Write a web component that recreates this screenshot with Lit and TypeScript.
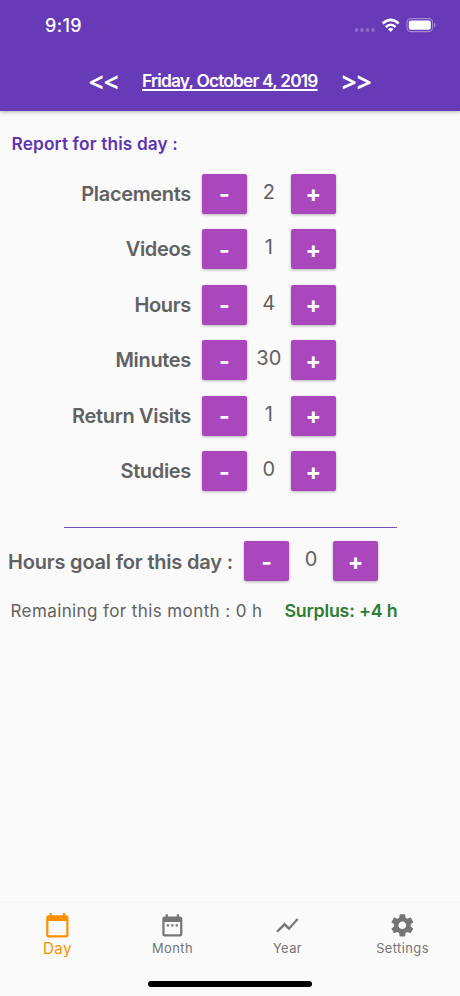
import { LitElement, html, svg, css } from "lit";
import { customElement, property, state } from "lit/decorators.js";
import { classMap } from "lit/directives/class-map.js";

const ICONS: Record<string, string> = {
  Day: "M20 3h-1V1h-2v2H7V1H5v2H4c-1.1 0-2 .9-2 2v16c0 1.1.9 2 2 2h16c1.1 0 2-.9 2-2V5c0-1.1-.9-2-2-2zm0 18H4V8h16v13z",
  Month:
    "M9 11H7v2h2v-2zm4 0h-2v2h2v-2zm4 0h-2v2h2v-2zm2-7h-1V2h-2v2H8V2H6v2H5c-1.11 0-1.99.9-1.99 2L3 20c0 1.1.89 2 2 2h14c1.1 0 2-.9 2-2V6c0-1.1-.9-2-2-2zm0 16H5V9h14v11z",
  Year: "M3.5 18.49l6-6.01 4 4L22 6.92l-1.41-1.41-7.09 7.97-4-4L2 16.99z",
  Settings:
    "M19.43 12.98c.04-.32.07-.64.07-.98s-.03-.66-.07-.98l2.11-1.65c.19-.15.24-.42.12-.64l-2-3.46c-.12-.22-.39-.3-.61-.22l-2.49 1c-.52-.4-1.08-.73-1.69-.98l-.38-2.65C14.46 2.18 14.25 2 14 2h-4c-.25 0-.46.18-.49.42l-.38 2.65c-.61.25-1.17.59-1.69.98l-2.49-1c-.23-.09-.49 0-.61.22l-2 3.46c-.13.22-.07.49.12.64l2.11 1.65c-.04.32-.07.65-.07.98s.03.66.07.98l-2.11 1.65c-.19.15-.24.42-.12.64l2 3.46c.12.22.39.3.61.22l2.49-1c.52.4 1.08.73 1.69.98l.38 2.65c.03.24.24.42.49.42h4c.25 0 .46-.18.49-.42l.38-2.65c.61-.25 1.17-.59 1.69-.98l2.49 1c.23.09.49 0 .61-.22l2-3.46c.12-.22.07-.49-.12-.64l-2.11-1.65zM12 15.5c-1.93 0-3.5-1.57-3.5-3.5s1.57-3.5 3.5-3.5 3.5 1.57 3.5 3.5-1.57 3.5-3.5 3.5z",
};

@customElement("count-stepper")
export class CountStepper extends LitElement {
  @property({ type: Number }) value = 0;

  static styles = css`
    :host {
      display: grid;
      grid-template-columns: 44.5px 44.4px 44.5px;
      height: 40px;
    }
    button {
      all: unset;
      display: flex;
      align-items: center;
      justify-content: center;
      height: 40px;
      border-radius: 2px;
      background: #ab47bc;
      color: #fff;
      box-shadow: 0 1px 3px rgba(0, 0, 0, 0.28);
    }
    .value {
      text-align: center;
      font-size: 20px;
      line-height: 36px;
      letter-spacing: 0.1px;
      color: #616161;
    }
    .sign {
      font-size: 23px;
      font-weight: 700;
      line-height: 40px;
      padding-top: 1px;
    }
  `;

  private change(by: number) {
    this.value = Math.max(0, this.value + by);
  }

  render() {
    return html`
      <button @click=${() => this.change(-1)}><span class="sign">-</span></button>
      <span class="value">${this.value}</span>
      <button @click=${() => this.change(1)}><span class="sign">+</span></button>
    `;
  }
}

@customElement("app-root")
export class AppRoot extends LitElement {
  @state() private tab = "Day";

  private rows: [string, number][] = [
    ["Placements", 2],
    ["Videos", 1],
    ["Hours", 4],
    ["Minutes", 30],
    ["Return Visits", 1],
    ["Studies", 0],
  ];

  static styles = css`
    :host {
      display: flex;
      flex-direction: column;
      width: 460px;
      height: 996px;
      overflow: hidden;
      background: #fafafa;
      font-family: Inter, "Liberation Sans", sans-serif;
      color: #616161;
      white-space: nowrap;
    }
    header {
      box-sizing: border-box;
      height: 111px;
      flex: none;
      background: #673ab7;
      color: #fff;
      box-shadow: 0 1px 4px rgba(0, 0, 0, 0.3);
    }
    .status {
      display: flex;
      justify-content: space-between;
      height: 51px;
      padding: 0 23px 0 45px;
    }
    .clock {
      font-size: 18px;
      font-weight: 500;
      line-height: 51px;
      letter-spacing: 0.35px;
    }
    .date {
      display: grid;
      grid-template-columns: 142px 176px 142px;
      height: 60px;
      line-height: 60px;
    }
    .title {
      font-size: 17.3px;
      font-weight: 600;
      letter-spacing: -0.79px;
      text-decoration: underline;
      text-decoration-thickness: 2px;
      text-underline-offset: 2px;
      text-decoration-skip-ink: none;
    }
    .arrow {
      font-family: "Open Sans", sans-serif;
      font-size: 26px;
      font-weight: 700;
      line-height: 63px;
    }
    .prev {
      text-align: right;
      padding-right: 23.5px;
    }
    .next {
      padding-left: 23.8px;
    }
    main {
      flex: 1;
    }
    h2 {
      margin: 0;
      padding: 22px 0 0 11.5px;
      font-size: 17.3px;
      line-height: 22px;
      font-weight: 600;
      letter-spacing: 0.13px;
      color: #5e35b1;
    }
    .rows {
      display: grid;
      gap: 15.56px;
      padding-top: 18.6px;
    }
    .row {
      display: grid;
      grid-template-columns: 191px auto;
      column-gap: 11.2px;
      justify-content: start;
      font-size: 20px;
      font-weight: 600;
      line-height: 41.4px;
      height: 40px;
    }
    .label {
      text-align: right;
      letter-spacing: -0.33px;
    }
    count-stepper {
      font-weight: 400;
    }
    .rule {
      height: 1px;
      width: 333px;
      margin: 35.4px 0 0 63.5px;
      background: #7150c4;
    }
    .goal {
      display: flex;
      height: 40px;
      margin-top: 13.7px;
      padding-left: 8px;
      font-size: 20px;
      font-weight: 600;
      line-height: 42px;
    }
    .goal-label {
      width: 236.3px;
      letter-spacing: -0.2px;
    }
    .totals {
      display: flex;
      padding-left: 10.5px;
      margin-top: 19px;
      font-size: 17.8px;
      line-height: 22px;
    }
    .remaining {
      width: 274px;
      font-size: 17px;
      letter-spacing: 0.4px;
    }
    .surplus {
      font-weight: 600;
      letter-spacing: -0.2px;
      color: #2e7d32;
    }
    nav {
      box-sizing: border-box;
      display: grid;
      grid-template-columns: repeat(4, 1fr);
      height: 94px;
      border-top: 1px solid #f5f5f5;
    }
    .tab {
      display: flex;
      flex-direction: column;
      align-items: center;
      padding-top: 9px;
      color: #757575;
      font-size: 12.9px;
      line-height: 20px;
      letter-spacing: 0.42px;
    }
    .tab svg {
      width: 26.7px;
      height: 26.7px;
      fill: currentColor;
    }
    .active {
      color: #fb9102;
      font-size: 15.2px;
      line-height: 19px;
    }
    .home {
      position: absolute;
      left: 148px;
      top: 981px;
      width: 164px;
      height: 6px;
      border-radius: 3px;
      background: #000;
    }
  `;

  private indicators() {
    return svg`<svg width="84" height="51" viewBox="353 0 84 51">
      <g fill="#fff" fill-opacity=".25">
        <circle cx="356.6" cy="30" r="1.9"/><circle cx="362" cy="30" r="1.9"/>
        <circle cx="367.5" cy="30" r="1.9"/><circle cx="373" cy="30" r="1.9"/>
      </g>
      <g fill="none" stroke="#fff" stroke-width="2.5">
        <path d="M382.7 23.5Q390.7 16.3 398.7 23.5"/>
        <path d="M385.8 27Q390.7 22.6 395.6 27"/>
      </g>
      <path fill="#fff" d="M387.9 29.1Q390.7 26.9 393.5 29.1L390.7 32Z"/>
      <rect x="407" y="18.6" width="25.5" height="13" rx="3.8" fill="none" stroke="#fff" stroke-opacity=".4" stroke-width="1.1"/>
      <rect x="408.8" y="20.5" width="22" height="9.3" rx="2" fill="#fff"/>
      <path d="M434 22.8a2.5 2.5 0 0 1 0 4.6z" fill="#fff" fill-opacity=".45"/>
    </svg>`;
  }

  render() {
    return html`
      <header>
        <div class="status"><span class="clock">9:19</span>${this.indicators()}</div>
        <div class="date">
          <span class="arrow prev">&lt;&lt;</span>
          <span class="title">Friday, October 4, 2019</span>
          <span class="arrow next">&gt;&gt;</span>
        </div>
      </header>
      <main>
        <h2>Report for this day :</h2>
        <div class="rows">
          ${this.rows.map(
            ([label, value]) => html`<div class="row">
              <span class="label">${label}</span><count-stepper .value=${value}></count-stepper>
            </div>`
          )}
        </div>
        <div class="rule"></div>
        <div class="goal">
          <span class="goal-label">Hours goal for this day :</span>
          <count-stepper .value=${0}></count-stepper>
        </div>
        <div class="totals">
          <span class="remaining">Remaining for this month : 0 h</span>
          <span class="surplus">Surplus: +4 h</span>
        </div>
      </main>
      <nav>
        ${Object.keys(ICONS).map(
          (name) => html`<div
            class=${classMap({ tab: true, active: name === this.tab })}
            @click=${() => (this.tab = name)}
          >
            <svg viewBox="0 0 24 24"><path d=${ICONS[name]}></path></svg>
            <span>${name}</span>
          </div>`
        )}
      </nav>
      <div class="home"></div>
    `;
  }
}
